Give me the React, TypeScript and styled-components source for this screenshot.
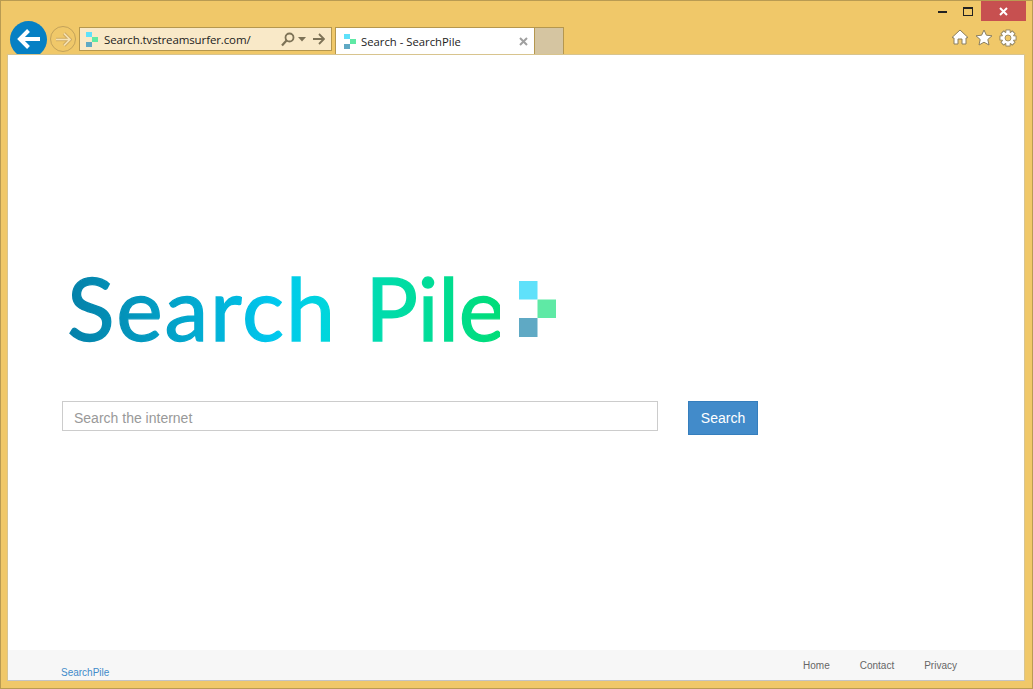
import styled, { createGlobalStyle } from 'styled-components'

const GlobalStyle = createGlobalStyle`
    html, body {
        margin: 0;
        padding: 0;
        background: #f0c869;
    }
    * {
        box-sizing: border-box;
    }
`

// * browser frame
const Window = styled.div`
    width: 1033px;
    height: 689px;
    display: flex;
    flex-direction: column;
    background: #f0c869;
    border: 1px solid #b99b52;
    overflow: hidden;
`
const TitleBar = styled.div`
    height: 20px;
    flex: none;
    display: flex;
    justify-content: flex-end;
    align-items: flex-start;
    padding-right: 6px;
`
const WindowButton = styled.div<{ $wide?: boolean; $danger?: boolean }>`
    width: ${props => (props.$wide ? '45px' : '26px')};
    height: 20px;
    display: flex;
    justify-content: center;
    align-items: center;
    background: ${props => (props.$danger ? '#c75050' : 'transparent')};
`
const NavRow = styled.div`
    height: 33px;
    flex: none;
    display: flex;
    align-items: flex-start;
    overflow: hidden;
    padding-left: 9px;
    padding-right: 15px;
`
const BackButton = styled.div`
    width: 37px;
    height: 37px;
    flex: none;
    border-radius: 50%;
    background: #0580c4;
    display: flex;
    justify-content: center;
    align-items: flex-start;
    padding-top: 8px;
`
const ForwardButton = styled.div`
    width: 26px;
    height: 26px;
    flex: none;
    margin: 5px 3px 0 3px;
    border-radius: 50%;
    border: 1px solid #c3a25a;
    display: flex;
    justify-content: center;
    align-items: center;
`
const AddressBar = styled.div`
    width: 253px;
    height: 24px;
    flex: none;
    margin-top: 6px;
    display: flex;
    align-items: center;
    padding: 0 4px 0 6px;
    background: #f9e9c8;
    border: 1px solid #b5974e;
`
const AddressText = styled.span`
    flex: 1;
    margin: 2px 0 0 6px;
    font: 11.5px/16px "Open Sans", sans-serif;
    letter-spacing: -0.12px;
    color: #1c1c1c;
    white-space: nowrap;
`
const AddressTools = styled.div`
    display: flex;
    align-items: center;
    gap: 3px;
    margin-right: 2px;
`
const ArrowIcon = styled.svg`
    margin-left: 3px;
`
const Tab = styled.div`
    width: 200px;
    height: 27px;
    flex: none;
    margin: 6px 0 0 3px;
    display: flex;
    align-items: center;
    padding: 0 6px 0 8px;
    background: #fff;
    border: 1px solid #b5974e;
    border-bottom: none;
`
const TabTitle = styled.span`
    flex: 1;
    margin: 1px 0 0 5px;
    font: 11.3px/16px "Open Sans", sans-serif;
    color: #1c1c1c;
    white-space: nowrap;
`
const NewTab = styled.div`
    width: 29px;
    height: 27px;
    flex: none;
    margin-top: 6px;
    background: #d5c5a1;
    border: 1px solid #b5974e;
    border-left: none;
    border-bottom: none;
`
const ToolIcons = styled.div`
    margin-left: auto;
    margin-top: 8px;
    display: flex;
    gap: 6px;
`

// * page
const Page = styled.main`
    flex: 1;
    margin: 0 7px 7px 6px;
    display: flex;
    flex-direction: column;
    background: #fff;
    border: 1px solid #d8c48e;
    border-bottom-color: #c4c4c4;
`
const Hero = styled.section`
    flex: 1;
    padding: 207px 0 0 54px;
`
const LogoRow = styled.div`
    display: flex;
    align-items: flex-start;
    height: 113px;
`
const LogoText = styled.h1`
    margin: 0 0 0 5px;
    width: 433px;
    padding-right: 2px;
    font: 400 88px/90px Lato, sans-serif;
    white-space: nowrap;
    color: transparent;
    -webkit-text-stroke: 1.3px transparent;
    background: linear-gradient(90deg, #0480a8 0%, #02a3c9 25%, #00c8ee 48%, #00d6dc 60%, #00dcae 72%, #00dd78 100%);
    -webkit-background-clip: text;
    background-clip: text;
`
const LogoWord = styled.span<{ $spacing: number; $gap?: number }>`
    letter-spacing: ${props => props.$spacing}px;
    margin-left: ${props => props.$gap ?? 0}px;
`
const LogoMark = styled.svg`
    margin: 19px 0 0 19px;
    flex: none;
`
const SearchRow = styled.form`
    margin-top: 26px;
    display: flex;
    align-items: flex-start;
    gap: 30px;
`
const SearchInput = styled.input`
    width: 596px;
    height: 30px;
    padding: 3px 11px 0;
    font: 14px "Liberation Sans", sans-serif;
    color: #333;
    background: #fff;
    border: 1px solid #ccc;
    outline: none;
    &::placeholder {
        color: #999;
        opacity: 1;
    }
`
const SearchButton = styled.button`
    width: 70px;
    height: 34px;
    padding: 0;
    font: 14px "Liberation Sans", sans-serif;
    color: #fff;
    background: #428bca;
    border: 1px solid #357ebd;
`
const Footer = styled.footer`
    height: 30px;
    flex: none;
    display: flex;
    justify-content: space-between;
    padding: 0 67px 0 53px;
    background: #f7f7f7;
    font: 10px/14px "Liberation Sans", sans-serif;
`
const Brand = styled.a`
    margin-top: 16px;
    color: #428bca;
`
const FooterLinks = styled.nav`
    display: flex;
    gap: 30px;
    margin-top: 9px;
`
const FooterLink = styled.a`
    color: #666;
`

const Favicon = () => (
    <svg width="12" height="15" viewBox="0 0 12 15">
        <rect x="0" y="0" width="6" height="5" fill="#5fe1fa" />
        <rect x="6" y="5" width="6" height="5" fill="#5fe9a5" />
        <rect x="0" y="10" width="6" height="5" fill="#5fa9c4" />
    </svg>
)

const gearTeeth = [0, 45, 90, 135]

const GearIcon = () => (
    <svg width="18" height="18" viewBox="0 0 18 18">
        {gearTeeth.map(deg => (
            <rect key={deg} x="6.5" y="0.5" width="5" height="17" rx="0.5" fill="#8a7f60" transform={`rotate(${deg} 9 9)`} />
        ))}
        <circle cx="9" cy="9" r="6.6" fill="#8a7f60" />
        {gearTeeth.map(deg => (
            <rect key={deg} x="7.3" y="1.4" width="3.4" height="15.2" fill="#fff" transform={`rotate(${deg} 9 9)`} />
        ))}
        <circle cx="9" cy="9" r="5.8" fill="#fff" />
        <circle cx="9" cy="9" r="3" fill="#f0c869" stroke="#8a7f60" strokeWidth="0.8" />
    </svg>
)

const App = () => {
    return <>
        <GlobalStyle />
        <Window>
            <TitleBar>
                <WindowButton>
                    <svg width="9" height="3"><rect width="9" height="2" y="1" fill="#222" /></svg>
                </WindowButton>
                <WindowButton>
                    <svg width="10" height="9" viewBox="0 0 10 9">
                        <rect x="0.5" y="0.5" width="9" height="8" fill="none" stroke="#222" />
                        <rect x="0" y="0" width="10" height="2" fill="#222" />
                    </svg>
                </WindowButton>
                <WindowButton $wide $danger>
                    <svg width="9" height="9" viewBox="0 0 9 9">
                        <path d="M1 1 L8 8 M8 1 L1 8" stroke="#fff" strokeWidth="2" />
                    </svg>
                </WindowButton>
            </TitleBar>
            <NavRow>
                <BackButton>
                    <svg width="24" height="20" viewBox="0 0 24 20">
                        <path d="M11.5 1.5 L3 10 L11.5 18.5 M4 10 H23" fill="none" stroke="#fff" strokeWidth="4" />
                    </svg>
                </BackButton>
                <ForwardButton>
                    <svg width="17" height="15" viewBox="0 0 17 15">
                        <path d="M9 1.5 L15 7.5 L9 13.5 M15 7.5 H1" fill="none" stroke="#cfab62" strokeWidth="3.6" />
                        <path d="M9 1.5 L15 7.5 L9 13.5 M15 7.5 H1" fill="none" stroke="#f6e2b4" strokeWidth="1.6" />
                    </svg>
                </ForwardButton>
                <AddressBar>
                    <Favicon />
                    <AddressText>Search.tvstreamsurfer.com/</AddressText>
                    <AddressTools>
                        <svg width="14" height="15" viewBox="0 0 14 15">
                            <circle cx="8.5" cy="5.5" r="4" fill="none" stroke="#7d7256" strokeWidth="1.8" />
                            <path d="M5.5 8.5 L1 13.5" stroke="#7d7256" strokeWidth="2.2" />
                        </svg>
                        <svg width="8" height="5" viewBox="0 0 8 5"><path d="M0 0 H8 L4 4.5 Z" fill="#7d7256" /></svg>
                        <ArrowIcon width="13" height="12" viewBox="0 0 13 12">
                            <path d="M7 1 L12 6 L7 11 M12 6 H1" fill="none" stroke="#7d7256" strokeWidth="1.8" />
                        </ArrowIcon>
                    </AddressTools>
                </AddressBar>
                <Tab>
                    <Favicon />
                    <TabTitle>Search - SearchPile</TabTitle>
                    <svg width="9" height="9" viewBox="0 0 9 9">
                        <path d="M1 1 L8 8 M8 1 L1 8" stroke="#a0a0a0" strokeWidth="2" />
                    </svg>
                </Tab>
                <NewTab />
                <ToolIcons>
                    <svg width="18" height="16" viewBox="0 0 18 16">
                        <path d="M9 1 L17 8.5 L15 9 V15 H11 V10 H7 V15 H3 V9 L1 8.5 Z" fill="#fff" stroke="#8a7f60" strokeWidth="1" />
                    </svg>
                    <svg width="18" height="17" viewBox="0 0 18 17">
                        <path d="M9 1 L11.4 6.2 L17 6.8 L12.8 10.5 L14 16 L9 13.2 L4 16 L5.2 10.5 L1 6.8 L6.6 6.2 Z" fill="#fff" stroke="#8a7f60" strokeWidth="1" />
                    </svg>
                    <GearIcon />
                </ToolIcons>
            </NavRow>
            <Page>
                <Hero>
                    <LogoRow>
                        <LogoText>
                            <LogoWord $spacing={1.8}>Search</LogoWord>{' '}
                            <LogoWord $spacing={-0.35} $gap={6}>Pile</LogoWord>
                        </LogoText>
                        <LogoMark width="37" height="56" viewBox="0 0 37 56">
                            <rect x="0" y="0" width="18.5" height="18.5" fill="#5fe1fa" />
                            <rect x="18.5" y="18.5" width="18.5" height="18.5" fill="#5fe9a5" />
                            <rect x="0" y="37" width="18.5" height="19" fill="#5fa9c4" />
                        </LogoMark>
                    </LogoRow>
                    <SearchRow>
                        <SearchInput placeholder="Search the internet" />
                        <SearchButton type="button">Search</SearchButton>
                    </SearchRow>
                </Hero>
                <Footer>
                    <Brand>SearchPile</Brand>
                    <FooterLinks>
                        <FooterLink>Home</FooterLink>
                        <FooterLink>Contact</FooterLink>
                        <FooterLink>Privacy</FooterLink>
                    </FooterLinks>
                </Footer>
            </Page>
        </Window>
    </>
}
export default App
